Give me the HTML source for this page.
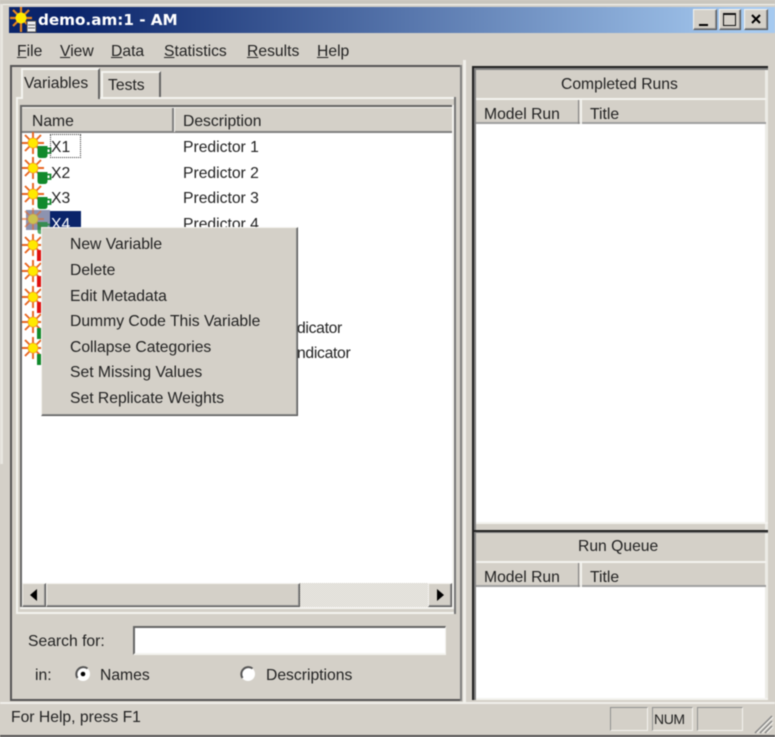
<!DOCTYPE html>
<html><head><meta charset="utf-8"><style>
html,body{margin:0;padding:0;background:#d4d0c8;}
#w{position:relative;width:775px;height:737px;overflow:hidden;background:#d4d0c8;font-family:"Liberation Sans",sans-serif;font-size:15.7px;color:#222;filter:blur(.5px);}
#w div{position:absolute;box-sizing:border-box;}
.t{position:absolute;white-space:nowrap;line-height:20px;height:20px;margin-top:2px;}
.wh{background:#fff;}
.btn{background:#d4d0c8;border:1px solid;border-color:#f4f3ef #555 #555 #f4f3ef;box-shadow:inset -1px -1px 0 #909090;}
svg{position:absolute;overflow:visible;}
u{text-decoration:underline;text-underline-offset:1px;}
</style></head><body><div id="w">
<svg width="0" height="0" style="position:absolute"><defs>
<g id="sun"><g stroke="#e8641f" stroke-width="1.900"><path d="M0-11V11M-11 0H11M-8-8L8 8M-8 8L8-8"/></g><circle r="5" fill="#ffe900" stroke="#f0a020" stroke-width=".8"/></g>
<g id="cupg"><path d="M0 0H10V9Q10 12 7 12H3Q0 12 0 9Z" fill="#118a2c"/><path d="M10 2.500H13V7H10" fill="none" stroke="#118a2c" stroke-width="1.800"/></g>
</defs></svg>

<!-- window edges -->
<div style="left:0;top:0;width:775px;height:4px;background:#c9c6be"></div>
<div style="left:3px;top:4px;width:772px;height:1px;background:#f4f3ef"></div>
<div style="left:0;top:4px;width:3px;height:460px;background:#e8e6e0"></div>
<div style="left:0;top:735px;width:775px;height:2px;background:#555"></div>

<!-- title bar -->
<div style="left:9px;top:7px;width:766px;height:26px;background:linear-gradient(90deg,#0a246a 0%,#0a246a 8%,#a6caf0 97%)"></div>
<svg style="left:0;top:0" width="60" height="36"><g stroke="#e8861f" stroke-width="2.200"><path d="M21 7V32M10 18H32M13 10L29 26M13 26L29 10"/></g><circle cx="21" cy="18" r="5.500" fill="#ffe900"/><rect x="27" y="21" width="9" height="11" fill="#eee" stroke="#444" stroke-width="1"/><path d="M28 25H35M28 28H35" stroke="#666"/></svg>
<span class="t" style="left:38px;top:10px;margin-top:0;font-family:'DejaVu Sans',sans-serif;font-weight:bold;font-size:15.2px;color:#fff">demo.am:1 - AM</span>
<div class="btn" style="left:693px;top:9px;width:24px;height:21px"></div>
<div style="left:699px;top:24px;width:9px;height:2px;background:#000"></div>
<div class="btn" style="left:719px;top:9px;width:22px;height:21px"></div>
<div style="left:723px;top:13px;width:13px;height:13px;border:1px solid #111;border-top-width:2px"></div>
<div class="btn" style="left:744px;top:9px;width:24px;height:21px"></div>
<svg style="left:744px;top:9px" width="24" height="21"><path d="M8 6L16 14M16 6L8 14" stroke="#000" stroke-width="2"/></svg>

<!-- menu -->
<span class="t" style="left:17px;top:40px"><u>F</u>ile</span>
<span class="t" style="left:60px;top:40px"><u>V</u>iew</span>
<span class="t" style="left:111px;top:40px"><u>D</u>ata</span>
<span class="t" style="left:164px;top:40px"><u>S</u>tatistics</span>
<span class="t" style="left:247px;top:40px"><u>R</u>esults</span>
<span class="t" style="left:317px;top:40px"><u>H</u>elp</span>

<!-- left pane -->
<div style="left:10px;top:65px;width:452px;height:2px;background:#555"></div>
<div style="left:10px;top:65px;width:2px;height:636px;background:#555"></div>
<div style="left:10px;top:699px;width:452px;height:2px;background:#555"></div>
<div style="left:460px;top:65px;width:2px;height:636px;background:#808080"></div>
<div style="left:463px;top:60px;width:3px;height:644px;background:#f0efea"></div>
<div style="left:0;top:702px;width:775px;height:2px;background:#f0efea"></div>

<!-- tab page -->
<div style="left:16px;top:97px;width:440px;height:2px;background:#f4f3ef"></div>
<div style="left:16px;top:97px;width:2px;height:517px;background:#f4f3ef"></div>
<div style="left:16px;top:612px;width:440px;height:2px;background:#f4f3ef"></div>
<div style="left:454px;top:97px;width:2px;height:517px;background:#777"></div>
<div style="left:21px;top:68px;width:79px;height:31px;background:#d4d0c8;border-top:2px solid #f4f3ef;border-left:2px solid #f4f3ef;border-right:2px solid #666"></div>
<span class="t" style="left:24px;top:72px">Variables</span>
<div style="left:101px;top:71px;width:60px;height:26px;border-top:2px solid #f4f3ef;border-left:2px solid #f4f3ef;border-right:2px solid #666"></div>
<span class="t" style="left:108px;top:74px">Tests</span>

<!-- list -->
<div style="left:20px;top:105px;width:434px;height:2px;background:#666"></div>
<div style="left:20px;top:105px;width:2px;height:504px;background:#666"></div>
<div style="left:20px;top:607px;width:434px;height:2px;background:#f4f3ef"></div>
<div style="left:452px;top:105px;width:2px;height:504px;background:#f4f3ef"></div>
<div class="wh" style="left:22px;top:107px;width:430px;height:476px"></div>
<div style="left:22px;top:107px;width:430px;height:26px;background:#d4d0c8;border-bottom:2px solid #808080;border-top:1px solid #f4f3ef"></div>
<div style="left:172px;top:108px;width:2px;height:24px;background:#808080"></div>
<div style="left:174px;top:108px;width:1px;height:24px;background:#f4f3ef"></div>
<span class="t" style="left:32px;top:110px">Name</span>
<span class="t" style="left:183px;top:110px">Description</span>

<svg style="left:0;top:0" width="60" height="370">
<use href="#sun" x="33" y="143"/><use href="#cupg" x="37.500" y="146"/>
<use href="#sun" x="33" y="168"/><use href="#cupg" x="37.500" y="172"/>
<use href="#sun" x="33" y="194"/><use href="#cupg" x="37.500" y="197"/>
<rect x="26" y="210" width="24" height="20" fill="#8d93b0"/>
<g opacity=".55"><use href="#sun" x="33" y="219"/></g><use href="#cupg" x="37.500" y="222" opacity=".7"/>
<use href="#sun" x="33" y="245"/><rect x="37" y="250" width="4" height="11" fill="#e01010"/>
<use href="#sun" x="33" y="271"/><rect x="37" y="276" width="4" height="11" fill="#e01010"/>
<use href="#sun" x="33" y="297"/><rect x="37" y="302" width="4" height="11" fill="#e01010"/>
<use href="#sun" x="33" y="322"/><rect x="37" y="328" width="4" height="11" fill="#118a2c"/>
<use href="#sun" x="33" y="348"/><rect x="37" y="354" width="4" height="11" fill="#118a2c"/>
</svg>

<div style="left:50px;top:134px;width:31px;height:24px;border:1px dotted #333"></div>
<span class="t" style="left:51px;top:136px">X1</span>
<span class="t" style="left:51px;top:162px">X2</span>
<span class="t" style="left:51px;top:187px">X3</span>
<div style="left:50px;top:211px;width:31px;height:18px;background:#0a246a"></div>
<span class="t" style="left:51px;top:213px;color:#fff">X4</span>
<span class="t" style="left:183px;top:136px">Predictor 1</span>
<span class="t" style="left:183px;top:162px">Predictor 2</span>
<span class="t" style="left:183px;top:187px">Predictor 3</span>
<span class="t" style="left:183px;top:213px">Predictor 4</span>
<span class="t" style="left:297px;top:317px;letter-spacing:-.3px">dicator</span>
<span class="t" style="left:297px;top:342px;letter-spacing:-.3px">ndicator</span>

<!-- scrollbar -->
<div style="left:22px;top:583px;width:430px;height:24px;background:repeating-conic-gradient(#f4f3ef 0 25%,#d4d0c8 0 50%) 0 0/2px 2px"></div>
<div class="btn" style="left:22px;top:583px;width:24px;height:24px"></div>
<svg style="left:22px;top:583px" width="24" height="24"><path d="M15 6V18L8 12Z" fill="#000"/></svg>
<div class="btn" style="left:46px;top:583px;width:254px;height:24px"></div>
<div class="btn" style="left:428px;top:583px;width:24px;height:24px"></div>
<svg style="left:428px;top:583px" width="24" height="24"><path d="M9 6V18L16 12Z" fill="#000"/></svg>

<!-- search -->
<span class="t" style="left:28px;top:630px">Search for:</span>
<div class="wh" style="left:133px;top:626px;width:313px;height:29px;border-top:2px solid #666;border-left:2px solid #666;border-right:1px solid #f4f3ef;border-bottom:2px solid #f4f3ef"></div>
<span class="t" style="left:35px;top:664px">in:</span>
<svg style="left:74px;top:664px" width="20" height="20"><circle cx="9" cy="10" r="7" fill="#fff"/><path d="M3.5 14A7 7 0 0 1 13.500 4.500" stroke="#555" stroke-width="2" fill="none"/><circle cx="9" cy="10" r="2.300" fill="#000"/></svg>
<span class="t" style="left:100px;top:664px">Names</span>
<svg style="left:239px;top:664px" width="20" height="20"><circle cx="9" cy="10" r="7" fill="#fff"/><path d="M3.5 14A7 7 0 0 1 13.500 4.500" stroke="#555" stroke-width="2" fill="none"/></svg>
<span class="t" style="left:266px;top:664px">Descriptions</span>

<!-- right pane -->
<div class="wh" style="left:476px;top:124px;width:289px;height:398px"></div>
<div class="wh" style="left:476px;top:587px;width:289px;height:111px"></div>
<div style="left:765px;top:70px;width:3px;height:630px;background:#ecebe6"></div>
<div style="left:472px;top:66px;width:296px;height:2px;background:#222"></div>
<div style="left:472px;top:68px;width:296px;height:2px;background:#808080"></div>
<div style="left:472px;top:66px;width:2px;height:634px;background:#222"></div>
<div style="left:474px;top:68px;width:2px;height:632px;background:#808080"></div>
<div style="left:476px;top:98px;width:290px;height:2px;background:#f4f3ef"></div>
<span class="t" style="left:561px;top:73px">Completed Runs</span>
<div style="left:476px;top:122px;width:290px;height:2px;background:#a0a0a0"></div>
<div style="left:578px;top:100px;width:1px;height:24px;background:#808080"></div>
<div style="left:580px;top:100px;width:2px;height:24px;background:#f4f3ef"></div>
<span class="t" style="left:484px;top:103px">Model Run</span>
<span class="t" style="left:590px;top:103px">Title</span>
<div style="left:476px;top:522px;width:292px;height:2px;background:#f4f3ef"></div>
<div style="left:472px;top:530px;width:296px;height:2px;background:#222"></div>
<div style="left:474px;top:532px;width:294px;height:1px;background:#808080"></div>
<span class="t" style="left:578px;top:535px">Run Queue</span>
<div style="left:476px;top:561px;width:290px;height:2px;background:#f4f3ef"></div>
<div style="left:476px;top:585px;width:290px;height:2px;background:#a0a0a0"></div>
<div style="left:578px;top:563px;width:1px;height:24px;background:#808080"></div>
<div style="left:580px;top:563px;width:2px;height:24px;background:#f4f3ef"></div>
<span class="t" style="left:484px;top:566px">Model Run</span>
<span class="t" style="left:590px;top:566px">Title</span>
<div style="left:476px;top:698px;width:292px;height:2px;background:#f4f3ef"></div>

<!-- status -->
<span class="t" style="left:11px;top:706px">For Help, press F1</span>
<div style="left:610px;top:707px;width:38px;height:24px;border:1px solid;border-color:#909090 #f4f3ef #f4f3ef #909090"></div>
<div style="left:652px;top:707px;width:41px;height:24px;border:1px solid;border-color:#909090 #f4f3ef #f4f3ef #909090"></div>
<span class="t" style="left:654px;top:707px;font-size:14px;letter-spacing:-.4px">NUM</span>
<div style="left:697px;top:707px;width:46px;height:24px;border:1px solid;border-color:#909090 #f4f3ef #f4f3ef #909090"></div>
<svg style="left:752px;top:712px" width="23" height="23"><path d="M3 21L20 4M8 21L20 9M13 21L20 14" stroke="#888" stroke-width="1.500"/><path d="M5 21L21 5M10 21L21 10M15 21L21 15" stroke="#f4f3ef" stroke-width="1"/></svg>

<!-- context menu -->
<div style="left:41px;top:227px;width:257px;height:189px;background:#d4d0c8;border:1px solid;border-color:#f4f3ef #505050 #505050 #f4f3ef;box-shadow:inset -1px -1px 0 #909090"></div>
<span class="t" style="left:70px;top:233px">New Variable</span>
<span class="t" style="left:70px;top:259px">Delete</span>
<span class="t" style="left:70px;top:285px">Edit Metadata</span>
<span class="t" style="left:70px;top:310px">Dummy Code This Variable</span>
<span class="t" style="left:70px;top:336px">Collapse Categories</span>
<span class="t" style="left:70px;top:361px">Set Missing Values</span>
<span class="t" style="left:70px;top:387px">Set Replicate Weights</span>
</div></body></html>
